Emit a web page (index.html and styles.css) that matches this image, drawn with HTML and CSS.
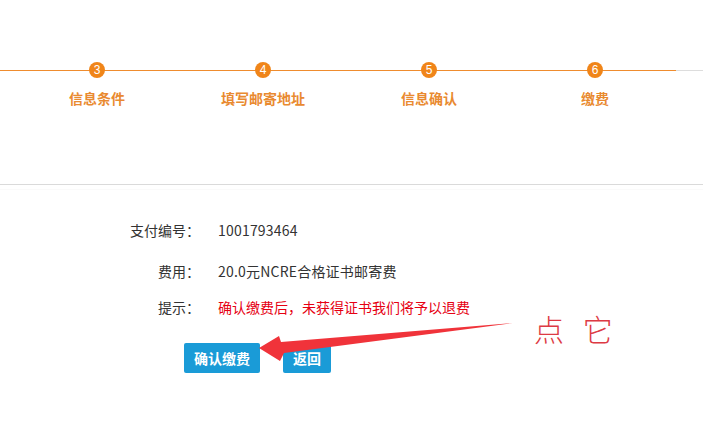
FILE: index.html
```html
<!DOCTYPE html>
<html lang="zh-CN">
	<head>
		<meta charset="UTF-8">
		<title>缴费</title>
		<link rel="stylesheet" href="styles.css">
	</head>
	<body>
		<div class="steps">
			<div class="step"><span class="num">3</span><span class="label">信息条件</span></div>
			<div class="step"><span class="num">4</span><span class="label">填写邮寄地址</span></div>
			<div class="step"><span class="num">5</span><span class="label">信息确认</span></div>
			<div class="step"><span class="num">6</span><span class="label">缴费</span></div>
		</div>
		<div class="divider"></div>

		<div class="form">
			<div class="row first">
				<span class="key">支付编号：</span>
				<span class="val">1001793464</span>
			</div>
			<div class="row second">
				<span class="key">费用：</span>
				<span class="val">20.0元NCRE合格证书邮寄费</span>
			</div>
			<div class="row">
				<span class="key">提示：</span>
				<span class="val warn">确认缴费后，未获得证书我们将予以退费</span>
			</div>
			<div class="buttons">
				<a class="btn">确认缴费</a>
				<a class="btn">返回</a>
			</div>
		</div>

		<!-- annotation -->
		<svg class="arrow" width="703" height="430" viewBox="0 0 703 430">
			<polygon points="259,348 279,336 281,342 513,323 284,353 280,361" fill="#f0333a"/>
		</svg>
		<div class="note">点&nbsp;它</div>
	</body>
</html>
```

FILE: styles.css
```css
body {
	margin: 0;
	font-family: "Noto Sans CJK SC", "Noto Sans", sans-serif;
	font-size: 14px;
	color: #333333;
	background-color: #ffffff;
	position: relative;
	width: 703px;
	height: 430px;
	overflow: hidden;
}

.steps {
	display: flex;
	padding-top: 62px;
	padding-left: 14px;
	background:
		linear-gradient(#ef8c2e, #ef8c2e) 0 70px / 676px 1px no-repeat,
		linear-gradient(#dddddd, #dddddd) 0 70px / 100% 1px no-repeat;
}
.step {
	width: 166px;
	display: flex;
	flex-direction: column;
	align-items: center;
}
.num {
	width: 16px;
	height: 16px;
	border-radius: 50%;
	background-color: #f08519;
	color: #ffffff;
	font-family: "Liberation Sans", sans-serif;
	font-size: 12px;
	line-height: 16px;
	text-align: center;
}
.label {
	margin-top: 10px;
	line-height: 20px;
	font-weight: bold;
	color: #e98a30;
}

.divider {
	margin-top: 76px;
	border-top: 1px solid #dadada;
	border-bottom: 1px solid #fafafa;
	height: 4px;
}

.form {
	padding-top: 30px;
}
.row {
	display: flex;
	line-height: 20px;
	margin-bottom: 16px;
}
.row.first {
	margin-bottom: 21px;
}
.key {
	width: 70px;
	margin-left: 130px;
	text-align: right;
}
.val {
	margin-left: 18px;
	letter-spacing: 0.2px;
}
.warn {
	color: #e60012;
	letter-spacing: 0;
}

.buttons {
	display: flex;
	gap: 23px;
	padding-left: 184px;
	margin-top: 26px;
}
.btn {
	height: 30px;
	line-height: 30px;
	padding: 0 10px;
	background-color: #1a9bd7;
	color: #ffffff;
	font-weight: bold;
	border-radius: 2px;
}

.arrow {
	position: absolute;
	left: 0;
	top: 0;
}
.note {
	position: absolute;
	left: 534px;
	top: 308px;
	font-size: 30px;
	line-height: 40px;
	color: #dd3a44;
	font-weight: 300;
	letter-spacing: 2px;
	word-spacing: 8px;
}
```
